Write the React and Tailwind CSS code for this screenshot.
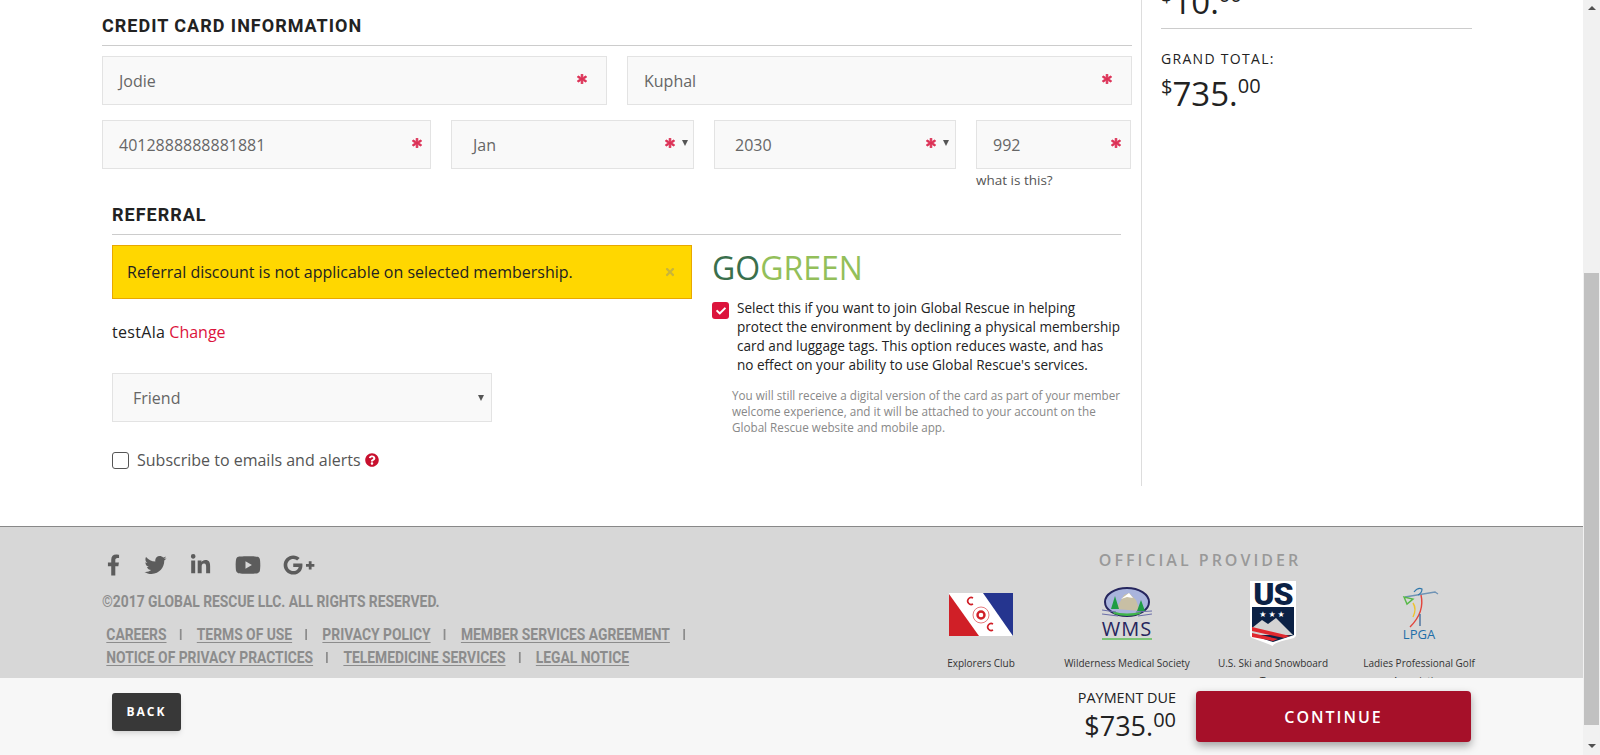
import { FaAsterisk, FaCheck, FaFacebookF, FaGooglePlusG, FaLinkedinIn, FaQuestionCircle, FaTimes, FaTwitter, FaYoutube } from 'react-icons/fa';

const Req = () => <FaAsterisk className="w-[10px] h-[10px] text-[#dc3055] stroke-current stroke-[40] shrink-0" />;

const Caret = () => <span className="w-0 h-0 border-x-[3px] border-x-transparent border-t-[6px] border-t-[#555] shrink-0" />;

const Field = ({ value, className, pad = 'pl-[16px]', right = 'pr-[19px]', select }) => (
    <div className={`h-[49px] flex items-center justify-between bg-[#f9f9f9] border border-[#e3e3e3] text-[16px] text-[#666] ${pad} ${right} ${className}`}>
        <span>{value}</span>
        <span className="flex items-center gap-[7px] -mt-[3px]">
            <Req />
            {select && <Caret />}
        </span>
    </div>
);

const ExplorersLogo = () => (
    <svg width="64" height="43" viewBox="0 0 64 43">
        <rect width="64" height="43" fill="#fff" />
        <path d="M0 1 L0 43 L30 43 Z" fill="#d01f27" />
        <path d="M34 0 L64 0 L64 43 Z" fill="#25358f" />
        <circle cx="32" cy="22" r="8" fill="none" stroke="#e0575c" strokeWidth="0.8" />
        <circle cx="32" cy="22" r="3.5" fill="none" stroke="#d01f27" strokeWidth="2.4" />
        <path d="M24 5 A3.5 3.5 0 1 0 24 11 M44 31 A3.5 3.5 0 1 0 44 37" fill="none" stroke="#d01f27" strokeWidth="1.6" />
    </svg>
);

const WmsLogo = () => (
    <div className="w-[56px] h-[53px] flex flex-col items-center">
        <svg width="50" height="33" viewBox="0 0 50 33" className="shrink-0">
            <ellipse cx="25" cy="15" rx="22" ry="14" fill="#a9b4dc" stroke="#26265e" strokeWidth="2" />
            <path d="M14 22 L22 8 L27 6 L34 13 L38 24 Z" fill="#c8bfa4" />
            <path d="M19 12 L27 6 L31 11 L25 10 Z" fill="#fff" />
            <path d="M9 22 L13 9 L17 22 Z M35 24 L39 13 L43 24 Z" fill="#1f9d45" />
            <path d="M10 24 Q25 29 40 24 L38 27 Q25 31 12 27 Z" fill="#3fb54a" />
            <path d="M0 23 L14 25 M0 27 L16 29 M36 29 L50 27 M34 25 L50 24" stroke="#6b6fa8" strokeWidth="1.2" />
        </svg>
        <span className="font-['Open_Sans',sans-serif] font-medium text-[20px] leading-[17px] tracking-[1px] text-[#26265e]">WMS</span>
        <span className="w-[50px] h-[2px] mt-[1px] bg-[#7cc576]" />
    </div>
);

const UsSkiLogo = () => (
    <svg width="46" height="65" viewBox="0 0 46 65">
        <path d="M0 0 H46 V55 L44 57 Q22 62 23 65 Q16 62 2 57 L0 55 Z" fill="#fff" />
        <text x="23" y="24" textAnchor="middle" fontFamily="Roboto, sans-serif" fontWeight="900" fontSize="32" letterSpacing="-1" fill="#0b2145">US</text>
        <path d="M2 26 H44 V54 L23 61 L2 54 Z" fill="#0b2145" />
        <text x="23" y="36" textAnchor="middle" fontFamily="DejaVu Sans, sans-serif" fontSize="8" letterSpacing="2" fill="#fff">★★★</text>
        <path d="M2 47 L12 39 L18 43 L26 37 L43 54 L2 54 Z" fill="#d3d3d3" />
        <path d="M2 46 L40 55 L34 57 L2 50 Z M2 52 L28 58 L23 60 L2 56 Z" fill="#e0282e" />
    </svg>
);

const LpgaLogo = () => (
    <div className="w-[40px] h-[55px] flex flex-col items-center">
        <svg width="40" height="42" viewBox="0 0 40 42" className="shrink-0">
            <path d="M6 11 L36 6 L39 8" fill="none" stroke="#6f93b5" strokeWidth="1.3" />
            <path d="M15 6 Q19 1 23 3 Q23 7 19 9" fill="none" stroke="#2f77ab" strokeWidth="1.2" />
            <path d="M5 11 L8 18 L14 13 Z" fill="none" stroke="#57b947" strokeWidth="1.4" />
            <path d="M22 9 Q26 26 11 41" fill="none" stroke="#e2453c" strokeWidth="1.4" />
            <path d="M14 17 Q18 23 14 31" fill="none" stroke="#edc22e" strokeWidth="1.4" />
            <path d="M21 28 L21 40" fill="none" stroke="#2f5d92" strokeWidth="1.2" />
        </svg>
        <span className="font-['Open_Sans',sans-serif] text-[13px] leading-[13px] text-[#1f6ea8]">LPGA</span>
    </div>
);

const providers = [
    { name: 'Explorers Club', logo: <ExplorersLogo />, h: 'pt-[2px]' },
    { name: 'Wilderness Medical Society', logo: <WmsLogo />, h: '' },
    { name: 'U.S. Ski and Snowboard Team', logo: <UsSkiLogo />, h: '' },
    { name: 'Ladies Professional Golf Association', logo: <LpgaLogo />, h: '' },
];

const Links = ({ items }) => (
    <div className="flex items-center">
        {items.map((item, i) => (
            <span key={item} className="flex items-center">
                <span className="underline underline-offset-2">{item}</span>
                {(i < items.length - 1 || items.length === 4) && <span className="w-[2px] h-[11px] ml-[15px] mr-[18px] bg-[#8c8c8c]" />}
            </span>
        ))}
    </div>
);

export default function App() {
    return (
        <div className="relative h-[755px] flex overflow-hidden bg-white font-['Open_Sans',sans-serif]">
            <div className="w-[1583px] shrink-0">
                {/* Form + order summary */}
                <div className="flex h-[486px]">
                    <div className="w-[1040px] ml-[102px] pr-[9px] border-r border-[#ddd]">
                        <div className="h-[46px] flex items-end pb-[9px] border-b border-[#ccc] font-['Roboto',sans-serif] font-bold text-[18px] leading-[20px] tracking-[1px] text-[#222]">
                            CREDIT CARD INFORMATION
                        </div>
                        <div className="flex gap-[20px] mt-[10px]">
                            <Field value="Jodie" className="w-[505px]" />
                            <Field value="Kuphal" className="w-[505px]" />
                        </div>
                        <div className="flex mt-[15px]">
                            <Field value="4012888888881881" className="w-[329px]" right="pr-[8px]" />
                            <Field value="Jan" select className="w-[243px] ml-[20px]" pad="pl-[21px]" right="pr-[5px]" />
                            <Field value="2030" select className="w-[242px] ml-[20px]" pad="pl-[20px]" right="pr-[6px]" />
                            <div className="w-[155px] ml-[20px]">
                                <Field value="992" className="w-[155px]" right="pr-[9px]" />
                                <p className="mt-[1px] text-[13.5px] leading-[20px] text-[#555]">what is this?</p>
                            </div>
                        </div>
                        <div className="ml-[10px] mr-[11px] mt-[14px]">
                            <div className="h-[31px] pt-[1px] flex items-start border-b border-[#ccc] font-['Roboto',sans-serif] font-bold text-[18px] leading-[20px] tracking-[1px] text-[#222]">
                                REFERRAL
                            </div>
                            <div className="flex mt-[10px]">
                                <div className="w-[580px] shrink-0">
                                    <div className="h-[54px] flex items-center justify-between pl-[14px] pr-[15px] bg-[#ffd700] border border-[#e8a800] text-[16px] text-[#222]">
                                        <span>Referral discount is not applicable on selected membership.</span>
                                        <FaTimes className="w-[12px] h-[12px] text-[#c9b53a]" />
                                    </div>
                                    <p className="mt-[22px] text-[16px] leading-[22px] text-[#222]">
                                        <span className="font-medium tracking-[0.3px]">testAla</span> <span className="text-[#dc143c]">Change</span>
                                    </p>
                                    <div className="w-[380px] h-[49px] mt-[30px] flex items-center justify-between pl-[20px] pr-[7px] bg-[#f9f9f9] border border-[#e3e3e3] text-[16px] text-[#666]">
                                        <span>Friend</span>
                                        <Caret />
                                    </div>
                                    <label className="flex items-center mt-[28px] text-[16px] leading-[20px] text-[#555]">
                                        <span className="w-[17px] h-[17px] bg-white border border-[#555] rounded-[3px] mr-[8px]" />
                                        Subscribe to emails and alerts
                                        <FaQuestionCircle className="w-[14px] h-[14px] ml-[4px] text-[#c8102e]" />
                                    </label>
                                </div>
                                <div className="ml-[20px] w-[412px] shrink-0">
                                    <h2 className="mt-[1px] text-[32px] leading-[44px] text-[#93bf5a]">
                                        <span className="text-[#3a6f4c]">GO</span>GREEN
                                    </h2>
                                    <div className="flex mt-[9px]">
                                        <span className="w-[17px] h-[17px] mt-[3px] flex items-center justify-center bg-[#dc143c] rounded-[3px] shrink-0">
                                            <FaCheck className="w-[10px] h-[10px] text-white" />
                                        </span>
                                        <p className="ml-[8px] text-[13.55px] leading-[19px] text-[#222] whitespace-nowrap">
                                            Select this if you want to join Global Rescue in helping<br />
                                            protect the environment by declining a physical membership<br />
                                            card and luggage tags. This option reduces waste, and has<br />
                                            no effect on your ability to use Global Rescue's services.
                                        </p>
                                    </div>
                                    <p className="ml-[20px] mt-[12px] text-[11.7px] leading-[16px] text-[#888] whitespace-nowrap">
                                        You will still receive a digital version of the card as part of your member<br />
                                        welcome experience, and it will be attached to your account on the<br />
                                        Global Rescue website and mobile app.
                                    </p>
                                </div>
                            </div>
                        </div>
                    </div>

                    <div className="w-[311px] ml-[19px]">
                        <div className="h-[29px] overflow-hidden border-b border-[#ccc]">
                            <p className="-mt-[17px] text-[33px] leading-[38px] font-medium text-[#222]">
                                <span className="relative -top-[12px] text-[20px]">$</span>10.<span className="relative -top-[12px] text-[20px]">00</span>
                            </p>
                        </div>
                        <p className="mt-[20px] text-[14px] leading-[20px] tracking-[1.3px] text-[#222]">GRAND TOTAL:</p>
                        <p className="mt-[5px] text-[33px] leading-[40px] font-medium text-[#222]">
                            <span className="relative -top-[12px] text-[20px]">$</span>735.<span className="relative -top-[13px] text-[20px]">00</span>
                        </p>
                    </div>
                </div>

                {/* Footer, runs on under the fixed payment bar */}
                <footer className="mt-[40px] h-[240px] pl-[102px] flex bg-[#d7d7d7] border-t border-[#888]">
                    <div className="w-[806px]">
                        <div className="flex items-center h-[24px] mt-[26px] ml-[5px] text-[#5c5c5c]">
                            <FaFacebookF className="w-[13px] h-[22px]" />
                            <FaTwitter className="w-[23px] h-[22px] ml-[24px]" />
                            <FaLinkedinIn className="w-[23px] h-[22px] ml-[22px]" />
                            <FaYoutube className="w-[26px] h-[26px] ml-[23px]" />
                            <FaGooglePlusG className="w-[32px] h-[26px] ml-[22px]" />
                        </div>
                        <div className="origin-left scale-x-[0.865] font-['Roboto',sans-serif] font-bold text-[16px] text-[#8c8c8c]">
                            <p className="mt-[15px] leading-[20px]">©2017 GLOBAL RESCUE LLC. ALL RIGHTS RESERVED.</p>
                            <div className="mt-[11px] ml-[5px] leading-[23px]">
                                <Links items={['CAREERS', 'TERMS OF USE', 'PRIVACY POLICY', 'MEMBER SERVICES AGREEMENT']} />
                                <Links items={['NOTICE OF PRIVACY PRACTICES', 'TELEMEDICINE SERVICES', 'LEGAL NOTICE']} />
                            </div>
                        </div>
                    </div>
                    <div className="w-[584px] pt-[21px]">
                        <p className="text-center font-semibold text-[16px] leading-[24px] tracking-[3px] text-[#999]">OFFICIAL PROVIDER</p>
                        <div className="grid grid-cols-4">
                            {providers.map((p) => (
                                <div key={p.name} className="flex flex-col items-center text-center px-[8px]">
                                    <div className={`h-[82px] flex items-center justify-center ${p.h}`}>{p.logo}</div>
                                    <p className="text-[10px] leading-[18px] text-[#333]">{p.name}</p>
                                </div>
                            ))}
                        </div>
                    </div>
                </footer>
            </div>

            {/* Browser scrollbar */}
            <aside className="w-[17px] shrink-0 bg-[#f1f1f1] flex flex-col items-center">
                <span className="mt-[6px] w-0 h-0 border-x-[4px] border-x-transparent border-b-[4px] border-b-[#505050]" />
                <span className="mt-[263px] w-[15px] h-[452px] bg-[#c1c1c1]" />
                <span className="mt-[19px] w-0 h-0 border-x-[4px] border-x-transparent border-t-[4px] border-t-[#505050]" />
            </aside>

            {/* Fixed payment bar */}
            <div className="absolute left-0 bottom-0 w-[1583px] h-[77px] pl-[112px] pr-[112px] flex items-start justify-between bg-[#f7f7f7]">
                <button className="mt-[15px] w-[69px] h-[38px] bg-[#383838] rounded-[3px] shadow-md text-white font-bold text-[12px] tracking-[2px]">BACK</button>
                <div className="flex items-start">
                    <div className="mt-[10px] text-right text-[#222]">
                        <p className="text-[14.4px] leading-[20px]">PAYMENT DUE</p>
                        <p className="text-[27px] leading-[35px] font-medium">
                            $735.<span className="relative -top-[9px] text-[20px] font-normal">00</span>
                        </p>
                    </div>
                    <button className="ml-[20px] mt-[13px] w-[275px] h-[51px] bg-[#a61029] rounded-[4px] shadow-[0_4px_8px_rgba(0,0,0,0.35)] text-white font-semibold text-[16px] tracking-[2px]">CONTINUE</button>
                </div>
            </div>
        </div>
    );
}
